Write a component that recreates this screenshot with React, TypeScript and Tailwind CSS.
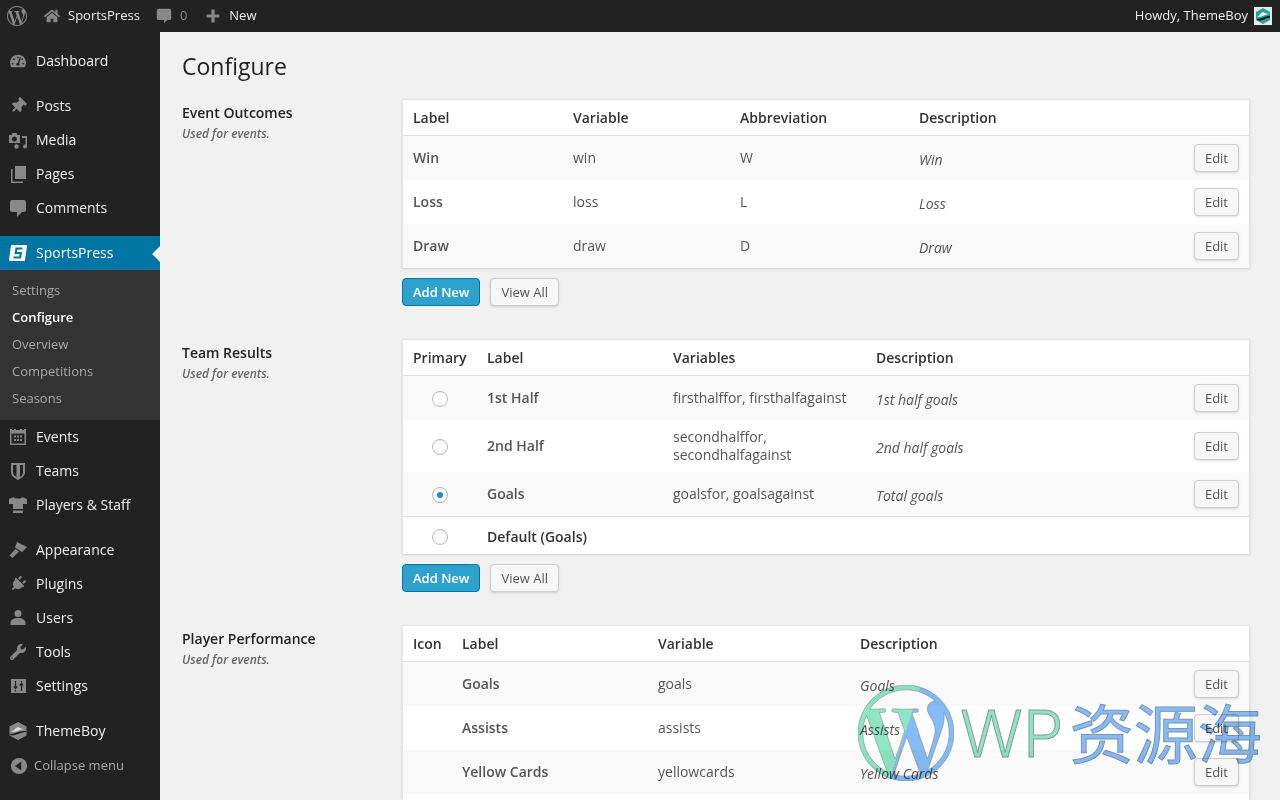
import type { ReactNode } from 'react'
import { FaHome, FaPlug, FaTachometerAlt, FaThumbtack, FaWrench } from 'react-icons/fa'

const WP_PATH =
  'M21.469 6.825c.84 1.537 1.318 3.3 1.318 5.175 0 3.979-2.156 7.456-5.363 9.325l3.295-9.527c.615-1.54.82-2.771.82-3.864 0-.405-.026-.78-.07-1.11m-7.981.105c.647-.03 1.232-.105 1.232-.105.582-.075.514-.93-.067-.899 0 0-1.755.135-2.88.135-1.064 0-2.85-.15-2.85-.15-.585-.03-.661.855-.075.885 0 0 .54.061 1.125.09l1.68 4.605-2.37 7.08L5.354 6.9c.649-.03 1.234-.1 1.234-.1.585-.075.516-.93-.065-.896 0 0-1.746.138-2.874.138-.2 0-.438-.008-.69-.015C4.911 3.15 8.235 1.215 12 1.215c2.809 0 5.365 1.072 7.286 2.833-.046-.003-.091-.009-.141-.009-1.06 0-1.812.923-1.812 1.914 0 .89.513 1.643 1.06 2.531.411.72.89 1.643.89 2.977 0 .915-.354 1.994-.821 3.479l-1.075 3.585-3.9-11.61.001.014zM12 22.784c-1.059 0-2.081-.153-3.048-.437l3.237-9.406 3.315 9.087c.024.053.05.101.078.149-1.12.393-2.325.609-3.582.609M1.211 12c0-1.564.336-3.05.935-4.39L7.29 21.709C3.694 19.96 1.212 16.271 1.211 12M12 0C5.385 0 0 5.385 0 12s5.385 12 12 12 12-5.385 12-12S18.615 0 12 0'

function Glyph({ children }: { children: ReactNode }) {
  return (
    <svg viewBox="0 0 20 20" className="w-5 h-5 fill-[#888]">
      {children}
    </svg>
  )
}

const icons: Record<string, ReactNode> = {
  dashboard: <FaTachometerAlt className="w-4 h-4 mx-0.5 text-[#888]" />,
  posts: <FaThumbtack className="w-4 h-4 mx-0.5 rotate-45 text-[#888]" />,
  media: (
    <Glyph>
      <path d="M1 5h2.500l1-2h4l1 2H12v8H1zM6.500 6.500a2.500 2.500 0 1 0 0 5 2.500 2.500 0 0 0 0-5z" fillRule="evenodd" />
      <path d="M14 6h5v10.500a2 2 0 1 1-1.500-1.900V8H14z" />
      <circle cx="8.500" cy="16.500" r="2.200" />
    </Glyph>
  ),
  pages: (
    <Glyph>
      <path d="M7 2h11v13H7z" />
      <path d="M3 5h1.500v12.500H15V19H3z" />
    </Glyph>
  ),
  comments: (
    <Glyph>
      <path d="M4 2h12a2 2 0 0 1 2 2v8a2 2 0 0 1-2 2h-2l-5 5v-5H4a2 2 0 0 1-2-2V4a2 2 0 0 1 2-2z" />
    </Glyph>
  ),
  sportspress: (
    <svg viewBox="0 0 20 20" className="w-5 h-5">
      <path d="M4 3h14l-2 14H2z" fill="#fff" stroke="#fff" strokeWidth="2" strokeLinejoin="round" />
      <path d="M14.500 5.500H8.500L7.800 10h5l-.7 4.500H5.500" fill="none" stroke="#0074a2" strokeWidth="2.200" />
    </svg>
  ),
  events: (
    <Glyph>
      <path
        fillRule="evenodd"
        d="M2 2h2v1h2V2h2v1h4V2h2v1h2V2h2v16H2zM3.500 6.500v10h13v-10zM6 8.500h2v2H6zM9 8.500h2v2H9zM12 8.500h2v2h-2zM6 12h2v2H6zM9 12h2v2H9zM12 12h2v2h-2z"
      />
    </Glyph>
  ),
  teams: (
    <Glyph>
      <path
        fillRule="evenodd"
        d="M3 2h14v9.500c0 3.500-3.500 5.500-7 7.500-3.500-2-7-4-7-7.500zM5 4v7.500c0 2 2 3.500 3.500 4.500V4zM12 4v12c1.500-1 3-2.500 3-4.500V4z"
      />
    </Glyph>
  ),
  players: (
    <Glyph>
      <path d="M6 2 1 4v5h4v5h10V9h4V4l-5-2c0 2-8 2-8 0z" />
      <path d="M5 15.500h10V18H5z" />
    </Glyph>
  ),
  appearance: (
    <Glyph>
      <path d="M9 2 19 7l-5 5-7-4.500z" />
      <path d="M7.500 9 11 11.500l-6.500 6.500-3-2.500z" />
    </Glyph>
  ),
  plugins: <FaPlug className="w-4 h-4 mx-0.5 rotate-45 text-[#888]" />,
  users: (
    <Glyph>
      <circle cx="10" cy="5.500" r="3.500" />
      <path d="M2.500 17v-2c0-3 3-5 7.500-5s7.500 2 7.500 5v2z" />
    </Glyph>
  ),
  tools: <FaWrench className="w-4 h-4 mx-0.5 text-[#888]" />,
  settings: (
    <Glyph>
      <path d="M3 3h15v14H3z" />
      <path d="M7.500 5v7M5.800 10.500l1.700 2 1.700-2M13.500 15V8M11.800 9.500l1.700-2 1.700 2M7.500 14v1.500M13.500 5v1.500" stroke="#222" strokeWidth="1.200" fill="none" />
    </Glyph>
  ),
  themeboy: (
    <Glyph>
      <path d="M10 1l8.500 4.500v9L10 19l-8.500-4.500v-9z" />
      <path d="M3 11c3-1 4-4 7-5 2 1 4 2 6 2-2 0-3 1-4 1-2 1-5 2-9 2z" fill="#ddd" />
      <path d="M2 13c3 0 5-1 8-2s5-1 8-1v1c-3 0-5 1-8 2s-5 2-8 1z" fill="#222" />
    </Glyph>
  ),
}

const upperMenu = [
  [['dashboard', 'Dashboard']],
  [
    ['posts', 'Posts'],
    ['media', 'Media'],
    ['pages', 'Pages'],
    ['comments', 'Comments'],
  ],
]

const lowerMenu = [
  [
    ['events', 'Events'],
    ['teams', 'Teams'],
    ['players', 'Players & Staff'],
  ],
  [
    ['appearance', 'Appearance'],
    ['plugins', 'Plugins'],
    ['users', 'Users'],
    ['tools', 'Tools'],
    ['settings', 'Settings'],
  ],
  [['themeboy', 'ThemeBoy']],
]

const submenu = ['Settings', 'Configure', 'Overview', 'Competitions', 'Seasons']

function MenuItem({ icon, label }: { icon: string; label: string }) {
  return (
    <div className="h-8.5 flex items-center gap-2 pl-2 text-sm text-[#eee]">
      <span className="w-5 h-5 flex items-center justify-center">{icons[icon]}</span>
      <span>{label}</span>
    </div>
  )
}

function Sidebar() {
  return (
    <aside className="w-40 shrink-0 bg-[#222] pt-3">
      {upperMenu.map((group, i) => (
        <div key={i} className="mb-[11px]">
          {group.map(([icon, label]) => (
            <MenuItem key={label} icon={icon} label={label} />
          ))}
        </div>
      ))}

      <div className="relative h-8.5 flex items-center gap-2 pl-2 text-sm text-white bg-[#0074a2]">
        <span className="w-5 h-5">{icons.sportspress}</span>
        <span>SportsPress</span>
        <span className="absolute right-0 top-2.5 border-y-8 border-r-8 border-y-transparent border-r-[#f1f1f1]" />
      </div>
      <div className="bg-[#333] h-[150px] pt-1.75 pl-3 text-[13px]">
        {submenu.map((item) => (
          <div
            key={item}
            className={`h-[27px] flex items-center ${item === 'Configure' ? 'text-white font-semibold' : 'text-[#aaa]'}`}
          >
            {item}
          </div>
        ))}
      </div>

      {lowerMenu.map((group, i) => (
        <div key={i} className={i < 2 ? 'mb-[11px]' : ''}>
          {group.map(([icon, label]) => (
            <MenuItem key={label} icon={icon} label={label} />
          ))}
        </div>
      ))}
      <div className="h-8.5 pt-0.5 flex items-center gap-1.5 pl-2.5 text-[13px] text-[#aaa]">
        <svg viewBox="0 0 20 20" className="w-4.5 h-4.5">
          <circle cx="10" cy="10" r="9" fill="#888" />
          <path d="M12.500 5v10l-7-5z" fill="#222" />
        </svg>
        <span>Collapse menu</span>
      </div>
    </aside>
  )
}

function AdminBar() {
  return (
    <header className="h-8 shrink-0 bg-[#222] flex items-center pl-2 pr-2 text-[13px] text-[#eee]">
      <svg viewBox="0 0 24 24" className="w-5 h-5 -ml-px fill-[#888]">
        <path d={WP_PATH} />
      </svg>
      <FaHome className="w-4 h-4 ml-4.25 text-[#888]" />
      <span className="ml-2">SportsPress</span>
      <svg viewBox="0 0 20 20" className="w-4 h-4 ml-4 fill-[#888]">
        <path d="M3 1h14a2 2 0 0 1 2 2v10a2 2 0 0 1-2 2h-3l-4 4v-4H3a2 2 0 0 1-2-2V3a2 2 0 0 1 2-2z" />
      </svg>
      <span className="ml-2 text-[#888]">0</span>
      <svg viewBox="0 0 20 20" className="w-4 h-4 ml-4.5 fill-[#888]">
        <path d="M8 2h4v6h6v4h-6v6H8v-6H2V8h6z" />
      </svg>
      <span className="ml-2">New</span>
      <span className="ml-auto">Howdy, ThemeBoy</span>
      <svg viewBox="0 0 18 18" className="w-4.5 h-4.5 ml-1.5">
        <path d="M0 0h18v18H0z" fill="#e8e8e8" />
        <path d="M9 1l7 4v8l-7 4-7-4V5z" fill="#1fa58f" />
        <path d="M3 10c3-1 3-4 6-5 2 1 4 2 6 2-2 0-3 1-4 1-2 1-5 2-8 2z" fill="#fff" />
        <path d="M3 12c3 0 4-1 7-2s4-1 6-1v1.500c-3 0-4 1-6 2s-5 1.500-7 .5z" fill="#111" />
      </svg>
    </header>
  )
}

function EditButton() {
  return (
    <button className="h-7 px-2.5 rounded-sm border border-[#ccc] bg-[#f7f7f7] shadow-sm text-[13px] text-[#555]">
      Edit
    </button>
  )
}

function Actions() {
  return (
    <div className="mt-2.5 flex gap-2.5">
      <button className="h-7 px-2.5 pt-0.5 rounded-sm border border-[#0074a2] bg-[#2ea2cc] text-[13px] font-semibold text-white">
        Add New
      </button>
      <button className="h-7 px-2.5 pt-0.5 rounded-sm border border-[#ccc] bg-[#f7f7f7] shadow-sm text-[13px] text-[#555]">
        View All
      </button>
    </div>
  )
}

function Heading({ title }: { title: string }) {
  return (
    <div className="w-55 shrink-0 pt-1">
      <h3 className="text-sm font-semibold text-[#222] leading-5">{title}</h3>
      <p className="mt-px text-xs italic font-semibold text-[#666] leading-5">Used for events.</p>
    </div>
  )
}

function HeaderRow({ grid, labels }: { grid: string; labels: string[] }) {
  return (
    <div className={`h-9 grid items-center border-b border-[#e1e1e1] pl-2.5 text-sm font-semibold text-[#333] ${grid}`}>
      {labels.map((label) => (
        <div key={label}>{label}</div>
      ))}
    </div>
  )
}

function EventOutcomes() {
  const grid = 'grid-cols-[160px_167px_179px_1fr_auto]'
  const rows = [
    ['Win', 'win', 'W', 'Win'],
    ['Loss', 'loss', 'L', 'Loss'],
    ['Draw', 'draw', 'D', 'Draw'],
  ]
  return (
    <section className="flex">
      <Heading title="Event Outcomes" />
      <div className="flex-1">
        <div className="bg-white border-x border-t border-neutral-200 shadow-sm">
          <HeaderRow grid={grid} labels={['Label', 'Variable', 'Abbreviation', 'Description']} />
          {rows.map((row, i) => (
            <div
              key={row[0]}
              className={`h-11 grid items-center pl-2.5 pr-2.5 text-sm text-[#555] ${grid} ${i % 2 === 0 ? 'bg-[#f9f9f9]' : 'bg-white'}`}
            >
              <div className="font-semibold">{row[0]}</div>
              <div>{row[1]}</div>
              <div>{row[2]}</div>
              <div className="italic pt-1">{row[3]}</div>
              <EditButton />
            </div>
          ))}
        </div>
        <Actions />
      </div>
    </section>
  )
}

function Radio({ checked }: { checked?: boolean }) {
  return (
    <div className="ml-7.25 mt-0.5 w-4 h-4 rounded-full border border-[#bbb] bg-white shadow-inner flex items-center justify-center">
      {checked && <div className="w-1.5 h-1.5 rounded-full bg-[#1e8cbe]" />}
    </div>
  )
}

function TeamResults() {
  const grid = 'grid-cols-[84px_186px_203px_1fr_auto]'
  const rows = [
    { label: '1st Half', vars: 'firsthalffor, firsthalfagainst', desc: '1st half goals', h: 'h-11 bg-[#f9f9f9]' },
    { label: '2nd Half', vars: 'secondhalffor, secondhalfagainst', desc: '2nd half goals', h: 'h-13 bg-white' },
    { label: 'Goals', vars: 'goalsfor, goalsagainst', desc: 'Total goals', h: 'h-11 bg-[#f9f9f9]', checked: true },
  ]
  return (
    <section className="flex">
      <Heading title="Team Results" />
      <div className="flex-1">
        <div className="bg-white border-x border-t border-neutral-200 shadow-sm">
          <div className={`h-9 grid items-center border-b border-[#e1e1e1] text-sm font-semibold text-[#333] ${grid}`}>
            <div className="pl-2.5">Primary</div>
            <div>Label</div>
            <div>Variables</div>
            <div>Description</div>
          </div>
          {rows.map((row) => (
            <div key={row.label} className={`grid items-center pr-2.5 text-sm text-[#555] ${grid} ${row.h}`}>
              <Radio checked={row.checked} />
              <div className="font-semibold">{row.label}</div>
              <div className="pr-4 leading-[18px]">{row.vars}</div>
              <div className="italic pt-1">{row.desc}</div>
              <EditButton />
            </div>
          ))}
          <div className={`h-9.5 grid items-center border-t border-[#e1e1e1] text-sm text-[#333] ${grid}`}>
            <Radio />
            <div className="pt-0.5 font-semibold col-span-2">Default (Goals)</div>
          </div>
        </div>
        <Actions />
      </div>
    </section>
  )
}

function PlayerPerformance() {
  const grid = 'grid-cols-[49px_196px_202px_1fr_auto]'
  const rows = [
    ['Goals', 'goals', 'Goals'],
    ['Assists', 'assists', 'Assists'],
    ['Yellow Cards', 'yellowcards', 'Yellow Cards'],
  ]
  return (
    <section className="flex">
      <Heading title="Player Performance" />
      <div className="flex-1">
        <div className="bg-white border-x border-t border-neutral-200 shadow-sm pb-8">
          <HeaderRow grid={grid} labels={['Icon', 'Label', 'Variable', 'Description']} />
          {rows.map((row, i) => (
            <div
              key={row[0]}
              className={`h-11 grid items-center pl-2.5 pr-2.5 text-sm text-[#555] ${grid} ${i % 2 === 0 ? 'bg-[#f9f9f9]' : 'bg-white'}`}
            >
              <div />
              <div className="font-semibold">{row[0]}</div>
              <div>{row[1]}</div>
              <div className="italic pt-1">{row[2]}</div>
              <EditButton />
            </div>
          ))}
        </div>
      </div>
    </section>
  )
}

function Watermark() {
  return (
    <div className="absolute left-[858px] top-[685px] flex items-center pointer-events-none mix-blend-multiply">
      <svg viewBox="0 0 24 24" className="w-24 h-24">
        <defs>
          <linearGradient id="wm" gradientUnits="userSpaceOnUse" x1="0.750" y1="8.250" x2="22.750" y2="15.750">
            <stop offset="50%" stopColor="#8de5c6" />
            <stop offset="50%" stopColor="#85bcf5" />
          </linearGradient>
        </defs>
        <path d={WP_PATH} fill="url(#wm)" stroke="#777" strokeWidth="0.12" />
      </svg>
      <span className="ml-1.5 font-['Inter',sans-serif] font-light text-[#8de5c6] text-[65px] leading-none [-webkit-text-stroke:1px_#8a9a95]">
        WP
      </span>
      <span className="ml-1.5 pb-1.5 font-['Noto_Sans_CJK_SC',sans-serif] text-[#85bcf5] text-[64px] leading-none [-webkit-text-stroke:1px_#7a94b0]">
        资源海
      </span>
    </div>
  )
}

export default function App() {
  return (
    <div className="relative h-screen overflow-hidden flex flex-col bg-[#f1f1f1] font-['Open_Sans',sans-serif]">
      <AdminBar />
      <div className="flex-1 flex min-h-0">
        <Sidebar />
        <main className="flex-1 pl-5.5 pr-7.5 min-w-0">
          <h1 className="h-16.75 pt-4.5 text-[23px] leading-8 text-[#222]">Configure</h1>
          <div className="flex flex-col gap-8.25">
            <EventOutcomes />
            <TeamResults />
            <PlayerPerformance />
          </div>
        </main>
      </div>
      <Watermark />
    </div>
  )
}
